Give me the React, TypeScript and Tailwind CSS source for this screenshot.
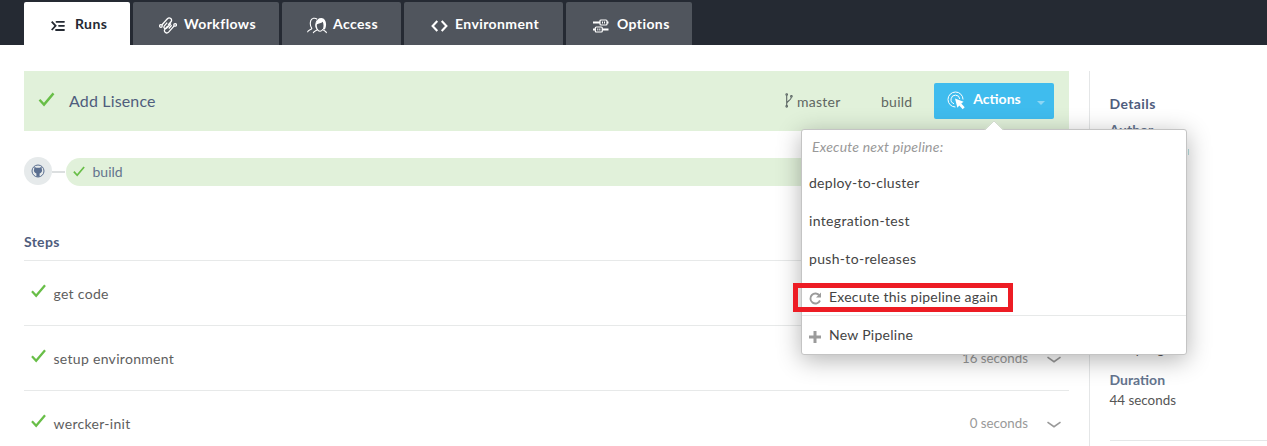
import type { ReactNode } from "react";

function Check({ className }: { className: string }) {
  return (
    <svg viewBox="0 0 16 15" fill="none" className={className}>
      <path d="M1 7.8 5.5 12.6 15 1.4" stroke="#68be47" strokeWidth="2.4" />
    </svg>
  );
}

const RunsIcon = () => (
  <svg width="15" height="12" viewBox="0 0 15 12" fill="none" stroke="#252a33" strokeWidth="1.8">
    <path d="M.7 1.6 4.6 5.8.7 10" />
    <path d="M5.5 1.8H13M8 5.8h5M5 10h8" strokeLinecap="round" />
  </svg>
);

const WorkflowIcon = () => (
  <svg width="18" height="17" viewBox="0 0 18 17" fill="none" stroke="#fff" strokeWidth="1.3">
    <circle cx="1.9" cy="9" r="1.3" />
    <circle cx="16.1" cy="7.9" r="1.3" />
    <path d="M2.8 8 8.4 1.8C10.6-.4 14 2.5 12 4.8L9.2 8" />
    <path d="M15.2 8.9 9.6 15.1C7.4 17.3 4 14.4 6 12.1L8.8 8.9" />
    <path d="M8.2 5.6 5.4 8.8c-1.6 2 .8 3.6 2.3 2.2L12 6.5" />
    <path d="m9.8 11.5 2.8-3.2" />
  </svg>
);

const AccessIcon = () => (
  <svg width="20" height="17" viewBox="0 0 20 17" fill="none" stroke="#fff" strokeWidth="1.1">
    <path d="M.5 15.2C.8 12.8 4.6 12.9 4.8 11.4 2.8 8.8 3 6.5 3.7 3.8 4.7 1 8 .5 10.1 2.2M10 11.6C8.6 9 8.6 5.7 10.4 3.4" />
    <path d="M6.2 16.2c.7-2.7 3.8-2 4.1-3.9C8.4 10.4 8.5 6.5 10.7 5.9M15.7 12.1c.6 2 3.2 1.4 3.8 3.9M10.4 12.6c1.2 2.2 4.3 2.2 5.5-.5" />
    <path d="M9.6 7.5C9 3 11.2.8 14.4.9c4.4 0 6 6.6 3.5 11.6l-2-.5c1-2.8.7-5.2-.2-7.3C14.2 6.3 11.8 6.2 9.6 7.5Z" fill="#fff" stroke="none" />
  </svg>
);

const CodeIcon = () => (
  <svg width="17" height="12" viewBox="0 0 17 12" fill="none" stroke="#fff" strokeWidth="2.1">
    <path d="M6.3 1 1.6 6l4.7 5M10.7 1l4.7 5-4.7 5" />
  </svg>
);

const OptionsIcon = () => (
  <svg width="16" height="14" viewBox="0 0 16 14" fill="none" stroke="#fff">
    <path d="M0 3.5h7M14 3.5h1.5M0 10.5h2.5M9.5 10.5h6" strokeWidth="2" />
    <rect x="7" y="1" width="7" height="5" rx="1" strokeWidth="1.2" />
    <rect x="2.3" y="8" width="7" height="5" rx="1" strokeWidth="1.2" />
    <path d="M9.5 2.5v2M11.5 2.5v2M4.8 9.5v2M6.8 9.5v2" />
  </svg>
);

const GithubIcon = () => (
  <svg width="14" height="14" viewBox="0 0 14 14">
    <circle cx="7" cy="7" r="6" fill="none" stroke="#5b6f90" strokeWidth="1" />
    <path d="M3.4 2.8 5.3 3.8h3.4l1.9-1 .2 2.2c.8 2.4-.1 3.8-2.2 4.4v3.4H5.4V9.4C3.3 8.8 2.4 7.4 3.2 5Z" fill="#5b6f90" />
  </svg>
);

const BranchIcon = () => (
  <svg width="8" height="15" viewBox="0 0 8 15" fill="none" stroke="#5c6664" strokeWidth="1.1">
    <path d="M1.7 2.3v10.4M1.7 10.5C2 7.5 6 8 6.3 4.2" />
    <circle cx="1.7" cy="1.5" r=".8" />
    <circle cx="6.4" cy="3.3" r=".8" />
    <circle cx="1.7" cy="13.3" r=".8" />
  </svg>
);

const TargetIcon = () => (
  <svg width="18" height="19" viewBox="0 0 18 19" fill="none" stroke="#fff">
    <path d="M8.4 16A7.5 7.5 0 1 1 16 8.5" strokeWidth="1" />
    <path d="M7 12.7A4.4 4.4 0 1 1 12.8 8" strokeWidth="1" />
    <path d="m8 7.6 8.6 3.2-2.3 1.8 3.4 3.7-2 1.9-3.4-3.7-1.9 2.3Z" fill="#fff" stroke="none" />
  </svg>
);

const Chevron = () => (
  <svg width="14" height="8" viewBox="0 0 14 8" fill="none" stroke="#999" strokeWidth="1.6">
    <path d="m.5 1.2 6.5 4.5 6.5-4.5" />
  </svg>
);

const RefreshIcon = () => (
  <svg width="13" height="13" viewBox="0 0 13 13" fill="none" stroke="#9b9b9b" strokeWidth="1.9">
    <path d="M10.5 3.6A5 5 0 1 0 11 8.5" />
    <path d="M12 .5v5H7Z" fill="#9b9b9b" stroke="none" />
  </svg>
);

const PlusIcon = () => (
  <svg width="12" height="12" viewBox="0 0 12 12" stroke="#9b9b9b" strokeWidth="3">
    <path d="M6 0v12M0 6h12" />
  </svg>
);

function Tab({ icon, label, className }: { icon: ReactNode; label: string; className: string }) {
  return (
    <div className={`flex h-[43px] items-center rounded-t-[2px] text-[14px] font-bold tracking-[0.4px] ${className}`}>
      <span className="flex w-[24px] shrink-0 items-center pt-[4px]">{icon}</span>
      <span className="whitespace-nowrap">{label}</span>
    </div>
  );
}

function Step({ name, time }: { name: string; time?: string }) {
  return (
    <div className="flex h-[65px] items-center border-t border-[#e7e9e9] pl-[7px] text-[14px] text-[#5e5e5e]">
      <Check className="mb-[4px] h-[14px] w-[15px]" />
      <span className="ml-[7.5px] tracking-[0.3px]">{name}</span>
      {time && <span className="ml-auto pt-[2px] text-[13.3px] text-[#999]">{time}</span>}
      {time && <span className="mr-[8px] ml-[19px] pt-[3px]"><Chevron /></span>}
    </div>
  );
}

function Menu() {
  return (
    <div className="absolute top-[129px] left-[801px] h-[226px] w-[386px] rounded-[3px] border border-[#c4c4c4] bg-white text-[14px] tracking-[0.27px] text-[#444] shadow-[0_5px_25px_rgba(0,0,0,0.3)]">
      <svg className="absolute -top-[10px] left-[182px]" width="20" height="11" viewBox="0 0 20 11">
        <path d="M0 10.5 10 .8l10 9.7Z" fill="#fff" />
        <path d="M1 10 10 1l9 9" fill="none" stroke="#c9d3c5" strokeWidth=".8" />
        <path d="M1 10h18v1H1Z" fill="#fff" />
      </svg>
      <div className="flex h-[34px] items-center pb-[2px] pl-[10px] tracking-[0.22px] text-[#999] italic">Execute next pipeline:</div>
      <div className="flex h-[38px] items-center pb-[2px] pl-[7px]">deploy-to-cluster</div>
      <div className="flex h-[38px] items-center pb-[2px] pl-[7px] tracking-[0.34px]">integration-test</div>
      <div className="flex h-[38px] items-center pb-[2px] pl-[7px] tracking-[0.32px]">push-to-releases</div>
      <div className="flex h-[37px] items-center pl-[7px] tracking-[0.24px]">
        <span className="w-[20px] pt-[3px]"><RefreshIcon /></span>Execute this pipeline again
      </div>
      <div className="flex h-[39px] items-center border-t border-[#e7e9e9] pb-[2px] pl-[7px]">
        <span className="w-[20px] pt-[6px]"><PlusIcon /></span>New Pipeline
      </div>
      <div className="absolute top-[153px] -left-[9px] h-[29px] w-[220px] border-[5px] border-[#ed1c24]" />
    </div>
  );
}

export default function App() {
  return (
    <div className="relative h-[446px] w-[1267px] overflow-hidden bg-white font-['Lato',sans-serif]">
      <header className="flex h-[45px] gap-[3px] bg-[#252a33] pt-[2px] pl-[24px] text-white">
        <Tab icon={<RunsIcon />} label="Runs" className="w-[106px] bg-white pl-[27px] text-[#252a33]" />
        <Tab icon={<WorkflowIcon />} label="Workflows" className="w-[146px] bg-[#50555d] pl-[26px] [&>span:first-child]:w-[25px]" />
        <Tab icon={<AccessIcon />} label="Access" className="w-[119px] bg-[#50555d] pl-[25px] [&>span:first-child]:w-[26px]" />
        <Tab icon={<CodeIcon />} label="Environment" className="w-[159px] bg-[#50555d] pl-[27px]" />
        <Tab icon={<OptionsIcon />} label="Options" className="w-[126px] bg-[#50555d] pl-[27px]" />
      </header>
      <div className="flex pt-[26px] pl-[24px]">
        <main className="w-[1045px]">
          <div className="flex h-[60px] items-center bg-[#e1f1da] pr-[15px] pl-[14px]">
            <Check className="mb-[3px] h-[15px] w-[17px]" />
            <span className="ml-[14px] pb-px text-[16px] tracking-[0.15px] text-[#4f5d7d]">Add Lisence</span>
            <span className="ml-auto flex items-center text-[14px] tracking-[0.25px] text-[#5f6662]">
              <span className="pb-[2px]"><BranchIcon /></span>
              <span className="ml-[4px] w-[84px]">master</span>
              <span className="w-[53px]">build</span>
            </span>
            <button className="flex h-[36px] w-[120px] items-center rounded-[2px] bg-[#3fbcee] pl-[13px] text-[14px] font-bold text-white">
              <span className="pb-px"><TargetIcon /></span>
              <span className="ml-[8px] w-[48px] pb-[5px]">Actions</span>
              <svg className="mt-[4px] ml-[16px]" width="8" height="4" viewBox="0 0 8 4"><path d="M0 0h8L4 4Z" fill="#8dd6f4" /></svg>
            </button>
          </div>
          <div className="mt-[26px] flex h-[29px] items-center">
            <div className="mb-[2px] flex size-[28px] items-center justify-center rounded-full bg-[#e6eaeb]"><GithubIcon /></div>
            <div className="mr-px h-[2px] w-[13px] bg-[#dcdfe0]" />
            <div className="flex h-[28px] flex-1 items-center rounded-full bg-[#e1f1da] pl-[7px] text-[14px] text-[#64748e]">
              <Check className="mb-px h-[11px] w-[12px]" />
              <span className="ml-[7.5px]">build</span>
            </div>
          </div>
          <h2 className="mt-[46px] h-[28px] text-[14px] leading-[20px] font-bold tracking-[0.3px] text-[#4f5d7d]">Steps</h2>
          <Step name="get code" />
          <Step name="setup environment" time="16 seconds" />
          <Step name="wercker-init" time="0 seconds" />
        </main>
        <aside className="ml-[20px] h-[375px] flex-1 border-l border-[#e4e6e7] pt-[23px] pl-[19.5px] text-[13.4px] leading-[20px] text-[#555]">
          <h2 className="text-[14px] font-bold tracking-[0.4px] text-[#4f5d7d]">Details</h2>
          <div className="mt-[6px] text-[14px] font-bold text-[#64748e]">Author</div>
          <div className="mt-[9px] h-[6px] w-[79px] border-r border-[#b9dfe1]" />
          <div className="mt-[184px]">2 days ago</div>
          <div className="mt-[11px] text-[14px] font-bold text-[#64748e]">Duration</div>
          <div>44 seconds</div>
          <div className="mt-[30px] border-t border-[#e4e6e7]" />
        </aside>
      </div>
      <Menu />
    </div>
  );
}
